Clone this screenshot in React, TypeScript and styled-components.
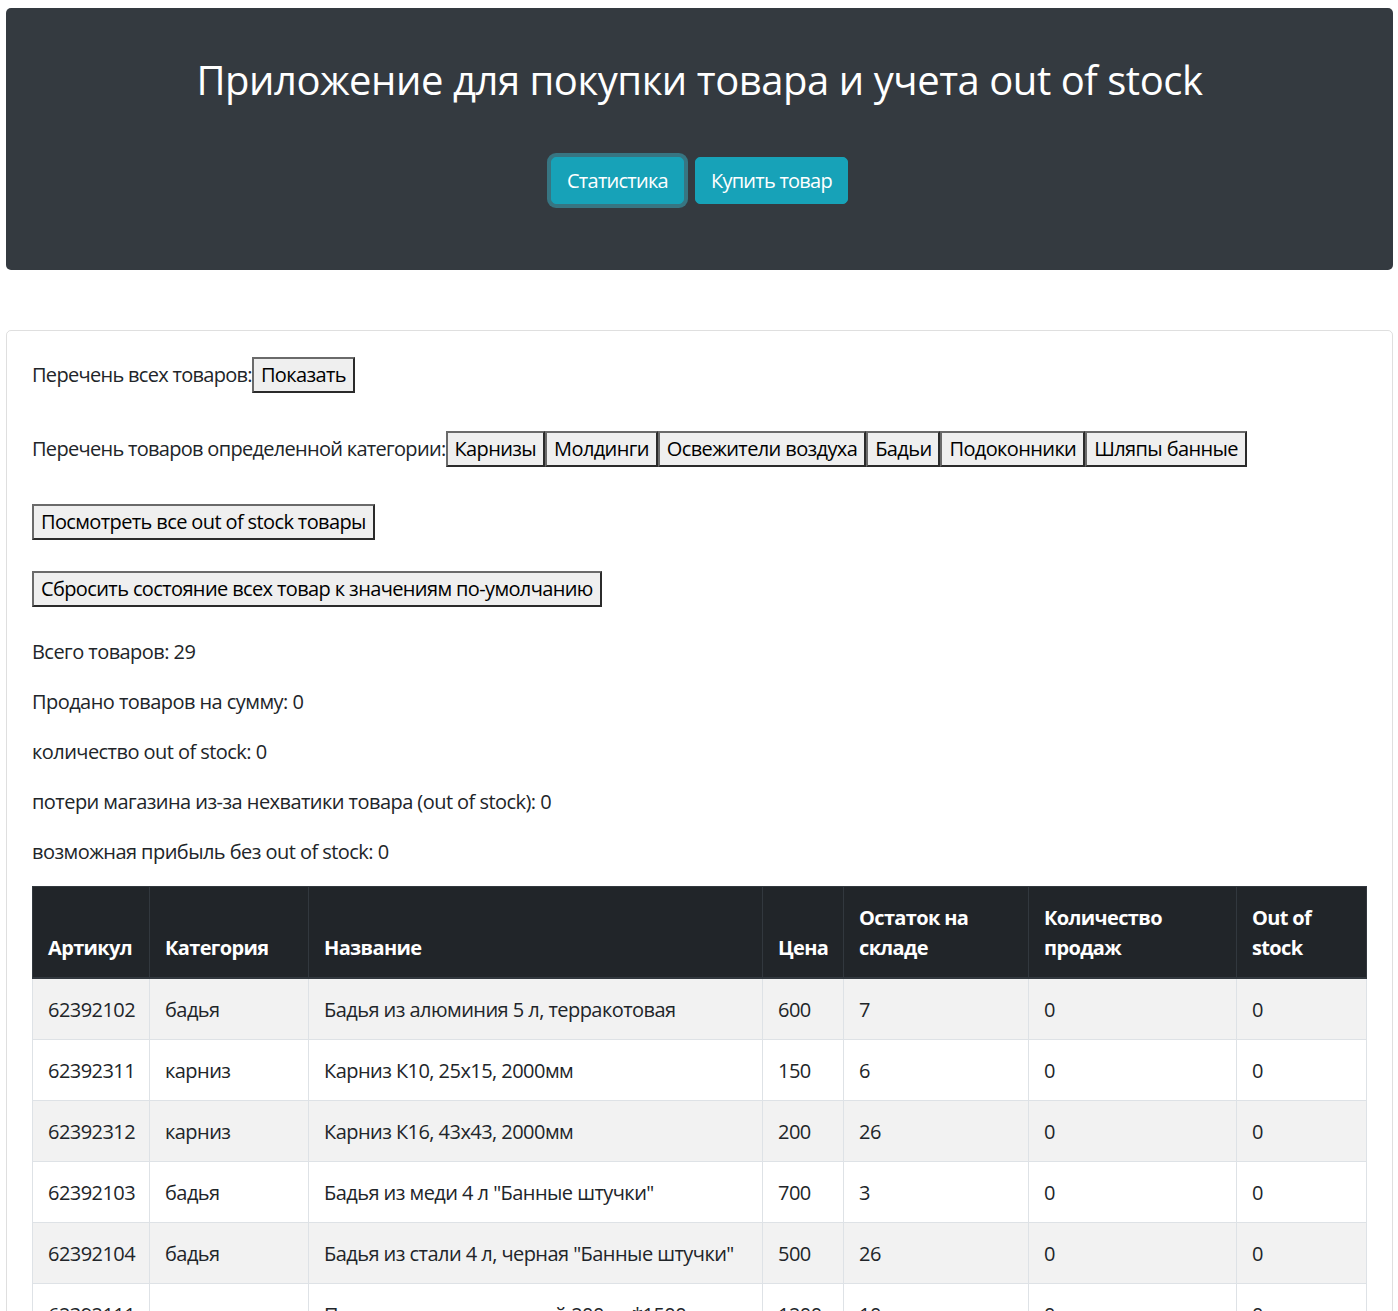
import React from "react";
import styled, { createGlobalStyle } from "styled-components";

const Global = createGlobalStyle`
  html, body { margin: 0; padding: 0; background: #fff; }
  body {
    font-family: "Open Sans", "Noto Sans", sans-serif;
    font-size: 20px;
    line-height: 1.5;
    color: #212529;
  }
  * { box-sizing: border-box; }
`;

const Page = styled.div`
  padding: 8px 5px 0 6px;
`;

const Hero = styled.header`
  background: #343a40;
  border-radius: 5px;
  color: #fff;
  padding: 48px 20px 66px;
  display: flex;
  flex-direction: column;
  align-items: center;
`;

const Title = styled.h1`
  margin: 0 0 53px;
  font-size: 40px;
  font-weight: 500;
  line-height: 48px;
  letter-spacing: -0.45px;
`;

const HeroActions = styled.div`
  display: flex;
  gap: 11px;
`;

const InfoButton = styled.button<{ $focused?: boolean }>`
  font-family: inherit;
  font-size: 20px;
  line-height: 30px;
  letter-spacing: -0.75px;
  color: #fff;
  background: #17a2b8;
  border: 1px solid #17a2b8;
  border-radius: 5px;
  padding: 7.5px 15px;
  cursor: pointer;
  box-shadow: ${(p) => (p.$focused ? "0 0 0 4px rgba(58,176,195,0.5)" : "none")};
`;

const Card = styled.section`
  margin-top: 60px;
  border: 1px solid rgba(0, 0, 0, 0.125);
  border-radius: 5px;
  padding: 25px 25px 0;
`;

const Row = styled.div<{ $mb: number }>`
  display: flex;
  align-items: center;
  height: 36px;
  margin-bottom: ${(p) => p.$mb}px;
  letter-spacing: -0.7px;
  padding-top: 1px;
`;

const Plain = styled.button`
  font-family: inherit;
  font-size: 20px;
  line-height: 30px;
  letter-spacing: -0.62px;
  color: #000;
  background: #efefef;
  border: 2px solid;
  border-color: #6a6a6a #2b2b2b #2b2b2b #6a6a6a;
  border-radius: 0;
  padding: 1px 7px;
  margin: 0;
  height: 36px;
  cursor: pointer;
`;

const Stat = styled.p`
  margin: 0 0 20px;
  line-height: 30px;
  letter-spacing: -0.55px;
`;

const Table = styled.table`
  width: 100%;
  border-collapse: collapse;
  margin-top: -1px;
  table-layout: fixed;
`;

const Th = styled.th`
  background: #212529;
  color: #fff;
  font-weight: 700;
  text-align: left;
  vertical-align: bottom;
  padding: 16px 15px 14px;
  line-height: 30px;
  border: 1px solid #32383e;
  border-bottom: 2px solid #32383e;
  letter-spacing: -0.65px;
`;

const Tr = styled.tr<{ $striped: boolean }>`
  background: ${(p) => (p.$striped ? "#f2f2f2" : "#fff")};
`;

const Td = styled.td`
  padding: 16px 15px 14px;
  line-height: 30px;
  border: 1px solid #dee2e6;
  vertical-align: top;
  white-space: nowrap;
  letter-spacing: -0.55px;
`;

const columns = [
  { label: "Артикул", w: 117 },
  { label: "Категория", w: 159 },
  { label: "Название", w: 454 },
  { label: "Цена", w: 81 },
  { label: "Остаток на складе", w: 185 },
  { label: "Количество продаж", w: 208 },
  { label: "Out of stock", w: 130 },
];

const rows = [
  ["62392102", "бадья", "Бадья из алюминия 5 л, терракотовая", "600", "7", "0", "0"],
  ["62392311", "карниз", "Карниз К10, 25х15, 2000мм", "150", "6", "0", "0"],
  ["62392312", "карниз", "Карниз К16, 43х43, 2000мм", "200", "26", "0", "0"],
  ["62392103", "бадья", "Бадья из меди 4 л \"Банные штучки\"", "700", "3", "0", "0"],
  ["62392104", "бадья", "Бадья из стали 4 л, черная \"Банные штучки\"", "500", "26", "0", "0"],
  ["62392111", "подоконник", "Подоконник пластиковый 200мм*1500", "1200", "10", "0", "0"],
];

const categories = ["Карнизы", "Молдинги", "Освежители воздуха", "Бадьи", "Подоконники", "Шляпы банные"];

export default function App() {
  return (
    <Page>
      <Global />
      <Hero>
        <Title>Приложение для покупки товара и учета out of stock</Title>
        <HeroActions>
          <InfoButton $focused>Статистика</InfoButton>
          <InfoButton>Купить товар</InfoButton>
        </HeroActions>
      </Hero>
      <Card>
        <Row $mb={38}>
          Перечень всех товаров:<Plain>Показать</Plain>
        </Row>
        <Row $mb={37}>
          Перечень товаров определенной категории:
          {categories.map((c) => (
            <Plain key={c}>{c}</Plain>
          ))}
        </Row>
        <Row $mb={31}>
          <Plain>Посмотреть все out of stock товары</Plain>
        </Row>
        <Row $mb={31}>
          <Plain>Сбросить состояние всех товар к значениям по-умолчанию</Plain>
        </Row>
        <Stat>Всего товаров: 29</Stat>
        <Stat>Продано товаров на сумму: 0</Stat>
        <Stat>количество out of stock: 0</Stat>
        <Stat>потери магазина из-за нехватики товара (out of stock): 0</Stat>
        <Stat>возможная прибыль без out of stock: 0</Stat>
        <Table>
          <colgroup>
            {columns.map((c) => (
              <col key={c.label} style={{ width: c.w }} />
            ))}
          </colgroup>
          <thead>
            <tr>
              {columns.map((c) => (
                <Th key={c.label}>{c.label}</Th>
              ))}
            </tr>
          </thead>
          <tbody>
            {rows.map((r, i) => (
              <Tr key={r[0]} $striped={i % 2 === 0}>
                {r.map((v, j) => (
                  <Td key={j}>{v}</Td>
                ))}
              </Tr>
            ))}
          </tbody>
        </Table>
      </Card>
    </Page>
  );
}
